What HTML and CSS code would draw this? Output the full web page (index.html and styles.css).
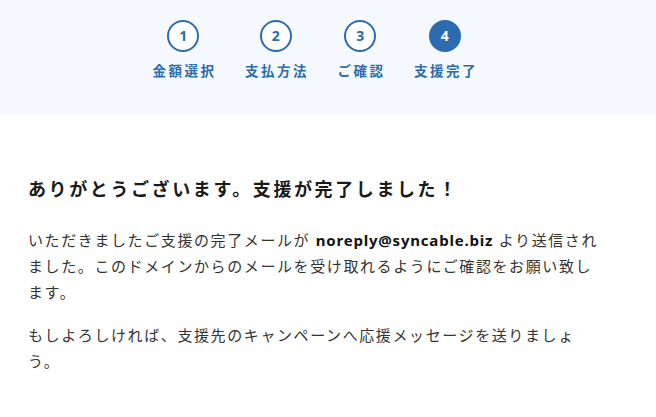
FILE: index.html
```html
<!DOCTYPE html>
<html lang="ja">
<head>
    <meta charset="utf-8">
    <title>支援完了</title>
    <link rel="stylesheet" href="styles.css">
</head>
<body>
    <div class="steps-band">
        <ol class="steps">
            <li class="step">
                <span class="step-num">1</span>
                <span class="step-label">金額選択</span>
            </li>
            <li class="step">
                <span class="step-num">2</span>
                <span class="step-label">支払方法</span>
            </li>
            <li class="step">
                <span class="step-num">3</span>
                <span class="step-label">ご確認</span>
            </li>
            <li class="step current">
                <span class="step-num">4</span>
                <span class="step-label">支援完了</span>
            </li>
        </ol>
    </div>

    <div class="content">
        <h2 class="title">ありがとうございます。支援が完了しました！</h2>
        <p>いただきましたご支援の完了メールが <b class="mail">noreply@syncable.biz</b> より送信されました。このドメインからのメールを受け取れるようにご確認をお願い致します。</p>
        <p>もしよろしければ、支援先のキャンペーンへ応援メッセージを送りましょう。</p>
    </div>
</body>
</html>
```

FILE: styles.css
```css
body {
    margin: 0;
    font-family: "Noto Sans", "Noto Sans CJK JP", sans-serif;
    color: #222;
    background: #fff;
}
.steps-band {
    background: #f5f9fd;
    height: 115px;
    padding-top: 20px;
    box-sizing: border-box;
}
.steps {
    list-style: none;
    margin: 0;
    padding: 0 28px 0 0;
    display: flex;
    justify-content: center;
    gap: 31px;
}
.step {
    display: flex;
    flex-direction: column;
    align-items: center;
    color: #2c6bb0;
}
.step-num {
    width: 32px;
    height: 32px;
    box-sizing: border-box;
    border: 2px solid #2c6bb0;
    border-radius: 50%;
    background: #fff;
    display: flex;
    align-items: center;
    justify-content: center;
    font-size: 14px;
    font-weight: 700;
    line-height: 1;
}
.step.current .step-num {
    background: #2c6bb0;
    color: #fff;
}
.step-label {
    margin-top: 9px;
    font-size: 13.5px;
    font-weight: 700;
    letter-spacing: 2.5px;
    line-height: 20px;
    margin-right: -2.5px;
}
.content {
    max-width: 574px;
    padding: 60px 0 0 28px;
}
.title {
    margin: 0 0 24px;
    font-size: 18px;
    font-weight: 700;
    letter-spacing: 2.6px;
    line-height: 28px;
    color: #1a1a1a;
}
.content p {
    margin: 0 0 17px;
    font-size: 15px;
    letter-spacing: 1.6px;
    line-height: 26px;
    color: #333;
}
.mail {
    letter-spacing: 0.8px;
    color: #111;
}
```
